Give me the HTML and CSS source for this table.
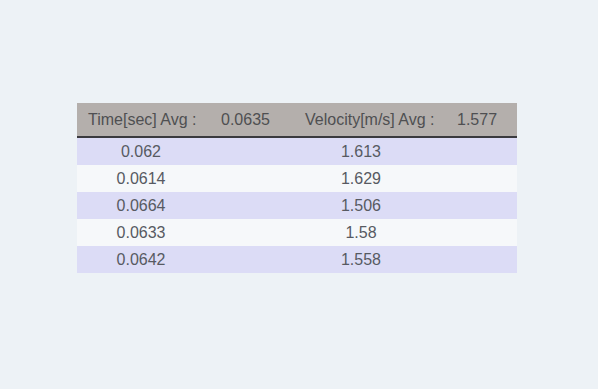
FILE: index.html
```html
<!DOCTYPE html>
<html>
<head>
<meta charset="utf-8">
<link rel="stylesheet" href="styles.css">
</head>
<body>
<div class="panel">
  <div class="head">
    <span>Time[sec] Avg :</span>
    <span>0.0635</span>
    <span>Velocity[m/s] Avg :</span>
    <span>1.577</span>
  </div>
  <div class="row odd"><span>0.062</span><span>1.613</span></div>
  <div class="row even"><span>0.0614</span><span>1.629</span></div>
  <div class="row odd"><span>0.0664</span><span>1.506</span></div>
  <div class="row even"><span>0.0633</span><span>1.58</span></div>
  <div class="row odd"><span>0.0642</span><span>1.558</span></div>
</div>
</body>
</html>
```
FILE: styles.css
```css
html, body {
  margin: 0;
  padding: 0;
  background: #edf2f6;
}
body {
  font-family: "Liberation Sans", Arial, sans-serif;
  font-size: 16px;
  color: #575a62;
}
.panel {
  width: 440px;
  margin: 103px 0 0 77px;
}
.head {
  display: grid;
  grid-template-columns: 133px 84px 152px auto;
  align-items: center;
  height: 33px;
  padding-left: 11px;
  background: #b4afac;
  border-bottom: 2px solid #3a3a3e;
  color: #4f4f52;
}
.row {
  display: grid;
  grid-template-columns: 128px 1fr;
  align-items: center;
  height: 27px;
  text-align: center;
}
.row.odd { background: #dcdcf6; }
.row.even { background: #f6f8fa; }
.row:first-of-type { height: 28px; }
```
